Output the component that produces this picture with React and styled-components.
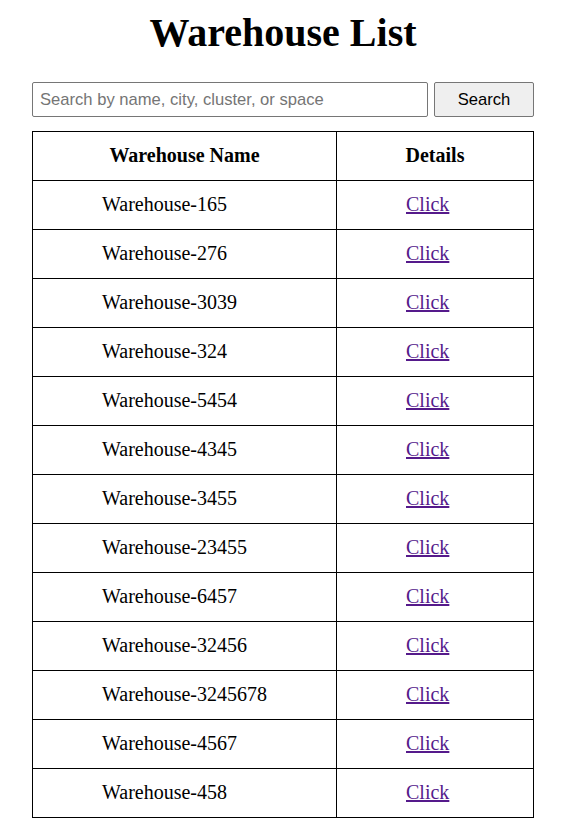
import React, { useState } from "react";
import styled, { createGlobalStyle } from "styled-components";

const GlobalStyle = createGlobalStyle`
  body {
    margin: 8px;
    background: #ffffff;
    font-family: "Liberation Serif", "Times New Roman", serif;
    color: #000000;
  }
`;

const Page = styled.div`
  width: 502px;
  padding-left: 24px;
  display: flex;
  flex-direction: column;
`;

const Title = styled.h1`
  margin: 0 0 26px;
  padding-top: 1px;
  font-size: 40px;
  line-height: 47px;
  font-weight: bold;
  text-align: center;
`;

const SearchRow = styled.form`
  display: flex;
  gap: 6px;
  margin-bottom: 14px;
`;

const SearchInput = styled.input`
  flex: 1;
  height: 35px;
  box-sizing: border-box;
  padding: 0 7px;
  border: 1px solid #767676;
  border-radius: 2px;
  font-family: "Liberation Sans", Arial, sans-serif;
  font-size: 16.6px;
  color: #000;

  &::placeholder {
    color: #757575;
  }
`;

const SearchButton = styled.button`
  width: 100px;
  height: 35px;
  box-sizing: border-box;
  border: 1px solid #767676;
  border-radius: 2px;
  background: #efefef;
  font-family: "Liberation Sans", Arial, sans-serif;
  font-size: 16.6px;
  color: #000;
`;

const Table = styled.table`
  width: 502px;
  border-collapse: collapse;
  table-layout: fixed;
  font-size: 20px;
  line-height: 24px;
`;

const HeadCell = styled.th`
  border: 1px solid #000;
  padding: 11px 0 13px;
  text-align: center;
  font-weight: bold;
`;

const Cell = styled.td`
  border: 1px solid #000;
  padding: 11px 0 13px 69px;
  text-align: left;
`;

const DetailLink = styled.a`
  color: #551a8b;
  text-decoration: underline;
`;

const warehouses = [
  "Warehouse-165",
  "Warehouse-276",
  "Warehouse-3039",
  "Warehouse-324",
  "Warehouse-5454",
  "Warehouse-4345",
  "Warehouse-3455",
  "Warehouse-23455",
  "Warehouse-6457",
  "Warehouse-32456",
  "Warehouse-3245678",
  "Warehouse-4567",
  "Warehouse-458",
];

export default function App() {
  const [query, setQuery] = useState("");

  return (
    <>
      <GlobalStyle />
      <Page>
        <Title>Warehouse List</Title>
        <SearchRow onSubmit={(e) => e.preventDefault()}>
          <SearchInput
            value={query}
            onChange={(e) => setQuery(e.target.value)}
            placeholder="Search by name, city, cluster, or space"
          />
          <SearchButton type="submit">Search</SearchButton>
        </SearchRow>
        <Table>
          <colgroup>
            <col style={{ width: "304px" }} />
            <col />
          </colgroup>
          <thead>
            <tr>
              <HeadCell>Warehouse Name</HeadCell>
              <HeadCell>Details</HeadCell>
            </tr>
          </thead>
          <tbody>
            {warehouses.map((name) => (
              <tr key={name}>
                <Cell>{name}</Cell>
                <Cell>
                  <DetailLink href="#">Click</DetailLink>
                </Cell>
              </tr>
            ))}
          </tbody>
        </Table>
      </Page>
    </>
  );
}
